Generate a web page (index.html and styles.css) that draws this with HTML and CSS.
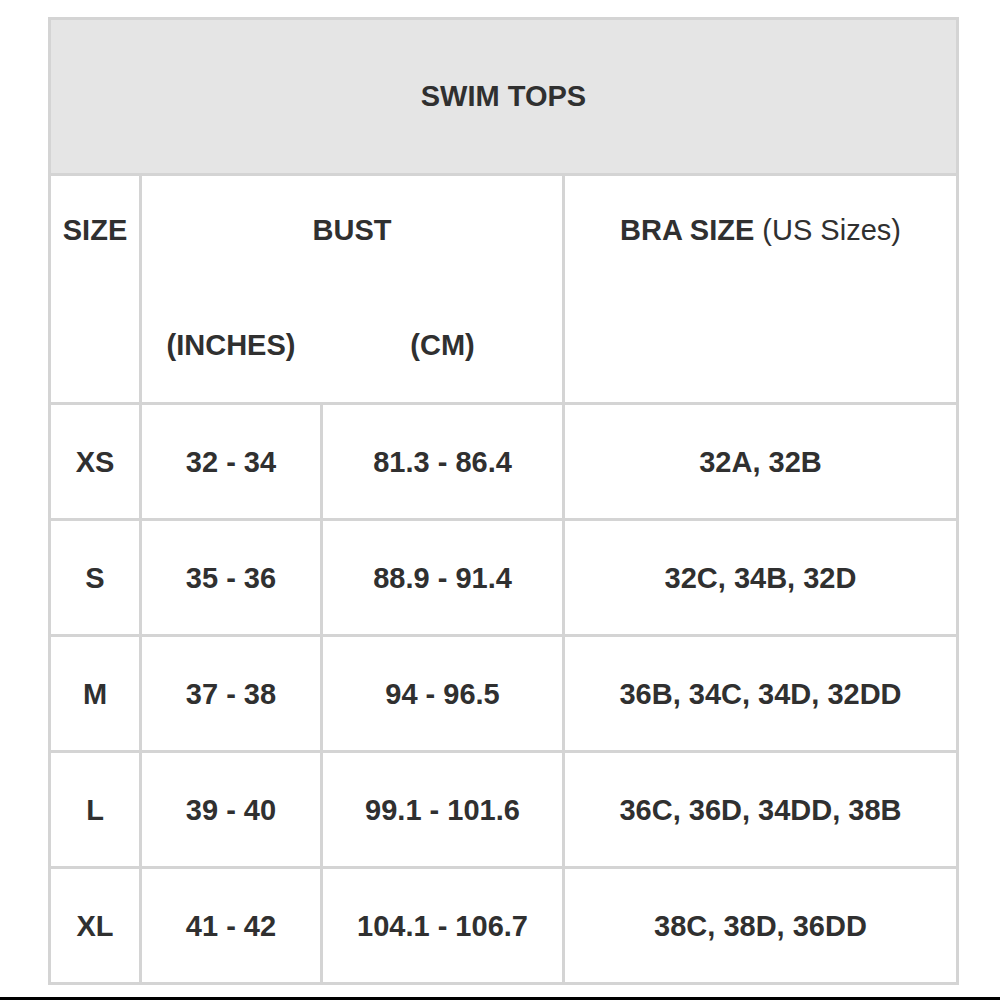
FILE: index.html
```html
<!DOCTYPE html>
<html>
<head>
<meta charset="utf-8">
<link rel="stylesheet" href="styles.css">
</head>
<body>
<div class="page">
  <div class="chart">
    <div class="cell title">SWIM TOPS</div>

    <div class="cell head size-head">SIZE</div>
    <div class="cell head bust-head">
      <div class="bust-label">BUST</div>
      <div class="unit">(INCHES)</div>
      <div class="unit">(CM)</div>
    </div>
    <div class="cell head bra-head">BRA SIZE <span class="light">(US Sizes)</span></div>

    <div class="cell">XS</div><div class="cell">32 - 34</div><div class="cell">81.3 - 86.4</div><div class="cell">32A, 32B</div>
    <div class="cell">S</div><div class="cell">35 - 36</div><div class="cell">88.9 - 91.4</div><div class="cell">32C, 34B, 32D</div>
    <div class="cell">M</div><div class="cell">37 - 38</div><div class="cell">94 - 96.5</div><div class="cell">36B, 34C, 34D, 32DD</div>
    <div class="cell">L</div><div class="cell">39 - 40</div><div class="cell">99.1 - 101.6</div><div class="cell">36C, 36D, 34DD, 38B</div>
    <div class="cell">XL</div><div class="cell">41 - 42</div><div class="cell">104.1 - 106.7</div><div class="cell">38C, 38D, 36DD</div>
  </div>
  <div class="rule"></div>
</div>
</body>
</html>
```
FILE: styles.css
```css
html, body {
  margin: 0;
  padding: 0;
  background: #ffffff;
}

.page {
  width: 1000px;
  padding-top: 17px;
  font-family: "Liberation Sans", Arial, Helvetica, sans-serif;
  color: #303030;
}

.chart {
  margin-left: 48px;
  width: 911px;
  box-sizing: border-box;
  background: #d4d4d4;
  padding: 3px;
  display: grid;
  grid-template-columns: 88px 178px 239px 391px;
  grid-template-rows: 153px 226px repeat(5, 113px);
  gap: 3px;
}

.cell {
  background: #ffffff;
  display: flex;
  align-items: center;
  justify-content: center;
  font-size: 29px;
  font-weight: bold;
  line-height: 34px;
  white-space: nowrap;
}

.title {
  grid-column: 1 / 5;
  background: #e5e5e5;
  padding-bottom: 2px;
}

.head {
  align-items: flex-start;
  padding-top: 37px;
}

.bust-head {
  grid-column: 2 / 4;
  display: grid;
  grid-template-columns: 178px 1fr;
  column-gap: 3px;
  grid-template-rows: 34px 34px;
  row-gap: 81px;
  align-content: start;
  justify-items: center;
}

.bust-label {
  grid-column: 1 / 3;
}

.light {
  font-weight: normal;
  margin-left: 8px;
}

.rule {
  margin-top: 12px;
  height: 3px;
  background: #000000;
}
```
